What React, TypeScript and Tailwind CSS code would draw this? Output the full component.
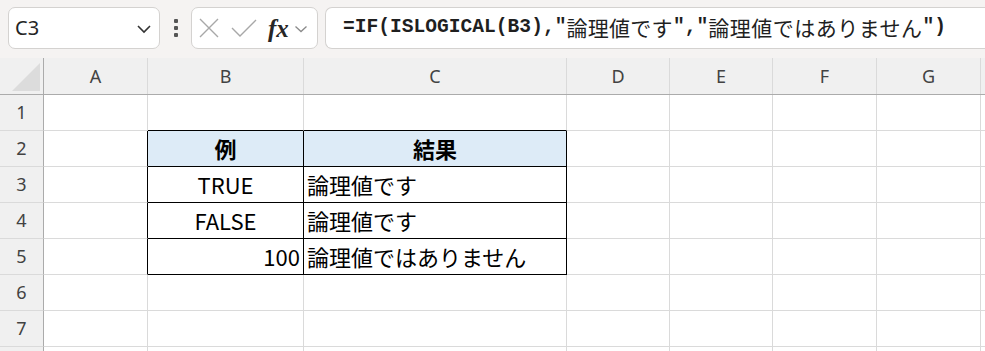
import React from "react";

const cols = ["A", "B", "C", "D", "E", "F", "G", ""];
const colW = ["w-[104px]", "w-[156px]", "w-[263px]", "w-[103px]", "w-[103px]", "w-[104px]", "w-[104px]", "w-[30px]"];

type Cell = { text?: string; align?: "left" | "center" | "right"; bold?: boolean; head?: boolean };

const data: Record<number, Record<number, Cell>> = {
  2: {
    1: { text: "例", align: "center", bold: true, head: true },
    2: { text: "結果", align: "center", bold: true, head: true },
  },
  3: { 1: { text: "TRUE", align: "center" }, 2: { text: "論理値です", align: "left" } },
  4: { 1: { text: "FALSE", align: "center" }, 2: { text: "論理値です", align: "left" } },
  5: { 1: { text: "100", align: "right" }, 2: { text: "論理値ではありません", align: "left" } },
};

function isTable(r: number, c: number) {
  return r >= 2 && r <= 5 && (c === 1 || c === 2);
}

const mono = { fontFamily: '"Liberation Mono", monospace' };
const cjk = { fontFamily: '"Noto Sans CJK JP", sans-serif' };

export default function App() {
  const rows = [1, 2, 3, 4, 5, 6, 7, 8];
  return (
    <div className="w-[985px] h-[351px] overflow-hidden bg-white" style={{ fontFamily: '"Noto Sans", "Noto Sans CJK JP", sans-serif' }}>
      {/* toolbar */}
      <div className="h-[58px] bg-[#f5f3f2] flex items-start pt-[7px] pl-[8px]">
        <div className="w-[152px] h-[42px] bg-white border border-[#d4d2d0] rounded-[7px] flex items-center justify-between pl-[6px] pr-[7px]">
          <span className="text-[20px] text-[#242424] leading-none">C3</span>
          <svg width="16" height="10" viewBox="0 0 16 10" className="mt-[1px]">
            <path d="M2 2 L8 8 L14 2" fill="none" stroke="#333" strokeWidth="1.6" />
          </svg>
        </div>
        <div className="w-[31px] h-[42px] flex flex-col items-center justify-center gap-[3px]">
          <div className="w-[4px] h-[4px] bg-[#555] rounded-[1px]" />
          <div className="w-[4px] h-[4px] bg-[#555] rounded-[1px]" />
          <div className="w-[4px] h-[4px] bg-[#555] rounded-[1px]" />
        </div>
        <div className="w-[127px] h-[42px] bg-white border border-[#d4d2d0] rounded-[7px] flex items-center pl-[6px]">
          <svg width="22" height="22" viewBox="0 0 22 22">
            <path d="M2 2 L20 20 M20 2 L2 20" stroke="#a8a8a8" strokeWidth="1.4" fill="none" />
          </svg>
          <svg width="26" height="22" viewBox="0 0 26 22" className="ml-[11px]">
            <path d="M1 11 L9 19 L25 3" stroke="#a8a8a8" strokeWidth="1.4" fill="none" />
          </svg>
          <span className="ml-[11px] text-[25px] leading-none italic text-[#262626] font-bold" style={{ fontFamily: '"Liberation Serif", serif' }}>
            fx
          </span>
          <svg width="14" height="10" viewBox="0 0 14 10" className="ml-[5px] mt-[1px]">
            <path d="M1.5 2.5 L7 7.5 L12.5 2.5" fill="none" stroke="#8a8a8a" strokeWidth="1.3" />
          </svg>
        </div>
        <div className="ml-[7px] flex-1 h-[42px] bg-white border border-r-0 border-[#d4d2d0] rounded-l-[7px] flex items-center pl-[17px] text-[#1f1f1f] whitespace-nowrap">
          <span className="text-[19.6px] font-bold" style={mono}>=IF(ISLOGICAL(B3),"</span>
          <span className="text-[21px] tracking-[0.3px]" style={cjk}>論理値です</span>
          <span className="text-[19.6px] font-bold" style={mono}>","</span>
          <span className="text-[21px] tracking-[0.5px]" style={cjk}>論理値ではありません</span>
          <span className="text-[19.6px] font-bold" style={mono}>")</span>
        </div>
      </div>

      {/* column header */}
      <div className="flex h-[37px] bg-[#f0f0f0] border-b border-[#ababab]">
        <div className="w-[44px] shrink-0 border-r border-[#ababab] relative">
          <svg width="29" height="28" viewBox="0 0 29 28" className="absolute left-[12px] top-[5px]">
            <path d="M28 0 L28 28 L0 28 Z" fill="#dcdcdc" />
          </svg>
        </div>
        {cols.map((c, i) => (
          <div key={i} className={`${colW[i]} shrink-0 border-r border-[#dadada] flex items-center justify-center text-[18px] text-[#424242]`}>
            {c}
          </div>
        ))}
      </div>

      {/* rows */}
      {rows.map((r) => (
        <div key={r} className="flex h-[36px]">
          <div className="w-[44px] shrink-0 bg-[#f0f0f0] border-r border-b border-r-[#ababab] border-b-[#dadada] flex items-center justify-center text-[18px] text-[#424242]">
            {r < 8 ? r : ""}
          </div>
          {cols.map((_, ci) => {
            const cell = data[r]?.[ci];
            const rightBlack = isTable(r, ci) || isTable(r, ci + 1);
            const bottomBlack = isTable(r, ci) || isTable(r + 1, ci);
            const align = cell?.align === "center" ? "justify-center" : cell?.align === "right" ? "justify-end pr-[3px]" : "justify-start pl-[3px]";
            return (
              <div
                key={ci}
                className={`${colW[ci]} shrink-0 border-r border-b ${rightBlack ? "border-r-black" : "border-r-[#dadada]"} ${bottomBlack ? "border-b-black" : "border-b-[#dadada]"} ${cell?.head ? "bg-[#ddebf7]" : ""} flex items-center ${align} text-[22px] text-black whitespace-nowrap overflow-visible`}
                style={cjk}
              >
                {cell?.text && <span className={cell.bold ? "font-bold" : ""}>{cell.text}</span>}
              </div>
            );
          })}
        </div>
      ))}
    </div>
  );
}
